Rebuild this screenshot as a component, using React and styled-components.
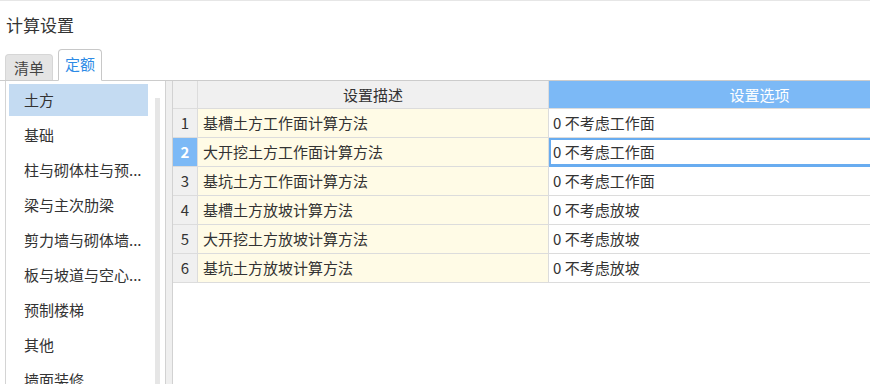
import React from "react";
import styled, { createGlobalStyle } from "styled-components";

const GlobalStyle = createGlobalStyle`
  html, body {
    margin: 0;
    padding: 0;
    background: #ffffff;
    overflow: hidden;
  }
  body {
    font-family: "Noto Sans CJK SC", "Noto Sans", sans-serif;
    color: #333333;
  }
`;

const Page = styled.div`
  width: 870px;
  height: 384px;
  display: flex;
  flex-direction: column;
  border-top: 1px solid #e6e6e6;
  box-sizing: border-box;
  overflow: hidden;
`;

const Title = styled.div`
  height: 47px;
  padding-left: 6px;
  font-size: 17px;
  line-height: 47px;
  color: #333;
`;

const TabBar = styled.div`
  display: flex;
  align-items: flex-end;
  gap: 5px;
  height: 32px;
  padding-left: 5px;
  position: relative;
  z-index: 1;
`;

const Tab = styled.div`
  height: ${(p) => (p.active ? "32px" : "26px")};
  padding: 0 ${(p) => (p.active ? "6px" : "8px")};
  min-width: ${(p) => (p.active ? "44px" : "47px")};
  text-align: center;
  box-sizing: border-box;
  border: 1px solid ${(p) => (p.active ? "#c8c8c8" : "#d6d6d6")};
  border-bottom: ${(p) => (p.active ? "1px solid #fff" : "none")};
  margin-bottom: ${(p) => (p.active ? "-1px" : "0")};
  border-radius: 4px 4px 0 0;
  background: ${(p) => (p.active ? "#ffffff" : "#e4e4e4")};
  color: ${(p) => (p.active ? "#2e8be6" : "#444")};
  font-size: 15px;
  line-height: ${(p) => (p.active ? "28px" : "26px")};
`;

const Body = styled.div`
  flex: 1;
  display: flex;
  border-top: 1px solid #cccccc;
  min-height: 0;
`;

const SidePanel = styled.div`
  width: 160px;
  flex-shrink: 0;
  margin-left: 5px;
  border-left: 1px solid #d4d4d4;
  box-sizing: border-box;
  display: flex;
  padding: 3px 0 0 3px;
`;

const List = styled.div`
  width: 139px;
  display: flex;
  flex-direction: column;
  gap: 3px;
`;

const Item = styled.div`
  height: 32px;
  flex-shrink: 0;
  padding-left: 15px;
  font-size: 15px;
  line-height: 32px;
  white-space: nowrap;
  color: #333;
  background: ${(p) => (p.selected ? "#c4dbf2" : "transparent")};
`;

const ScrollTrack = styled.div`
  width: 5px;
  margin: 14px 0 0 7px;
  background: #e6e6e6;
`;

const Splitter = styled.div`
  width: 6px;
  flex-shrink: 0;
  border-left: 1px solid #d2d2d2;
  border-right: 1px solid #d2d2d2;
  background: #efefef;
`;

const Grid = styled.div`
  display: grid;
  grid-template-columns: 25px 351px 422px;
  grid-auto-rows: 29px;
  grid-template-rows: 28px;
  align-content: start;
  flex-shrink: 0;
`;

const Cell = styled.div`
  box-sizing: border-box;
  border-right: 1px solid #dcdcdc;
  border-bottom: 1px solid #dcdcdc;
  font-size: 15px;
  line-height: 28px;
  white-space: nowrap;
  overflow: hidden;
`;

const HeadCell = styled(Cell)`
  text-align: center;
  background: ${(p) => (p.highlight ? "#7cb9f6" : "#f0f0f0")};
  color: ${(p) => (p.highlight ? "#ffffff" : "#333")};
  line-height: 27px;
`;

const NumCell = styled(Cell)`
  text-align: center;
  background: ${(p) => (p.selected ? "#7cb9f6" : "#f0f0f0")};
  color: ${(p) => (p.selected ? "#ffffff" : "#333")};
  font-weight: ${(p) => (p.selected ? "bold" : "normal")};
`;

const DescCell = styled(Cell)`
  background: #fffbe6;
  padding-left: 5px;
`;

const OptionCell = styled(Cell)`
  padding-left: 4px;
  background: #ffffff;
  box-shadow: ${(p) => (p.focused ? "inset 0 0 0 2px #68acf0" : "none")};
  border-bottom-color: ${(p) => (p.focused ? "#68acf0" : "#dcdcdc")};
`;

const categories = [
  "土方",
  "基础",
  "柱与砌体柱与预...",
  "梁与主次肋梁",
  "剪力墙与砌体墙...",
  "板与坡道与空心...",
  "预制楼梯",
  "其他",
  "墙面装修",
];

const rows = [
  { desc: "基槽土方工作面计算方法", value: "0 不考虑工作面" },
  { desc: "大开挖土方工作面计算方法", value: "0 不考虑工作面" },
  { desc: "基坑土方工作面计算方法", value: "0 不考虑工作面" },
  { desc: "基槽土方放坡计算方法", value: "0 不考虑放坡" },
  { desc: "大开挖土方放坡计算方法", value: "0 不考虑放坡" },
  { desc: "基坑土方放坡计算方法", value: "0 不考虑放坡" },
];

export default function App() {
  const selectedRow = 1;
  return (
    <>
      <GlobalStyle />
      <Page>
        <Title>计算设置</Title>
        <TabBar>
          <Tab>清单</Tab>
          <Tab active>定额</Tab>
        </TabBar>
        <Body>
          <SidePanel>
            <List>
              {categories.map((name, index) => (
                <Item key={name} selected={index === 0}>
                  {name}
                </Item>
              ))}
            </List>
            <ScrollTrack />
          </SidePanel>
          <Splitter />
          <Grid>
            <HeadCell />
            <HeadCell>设置描述</HeadCell>
            <HeadCell highlight>设置选项</HeadCell>
            {rows.map((row, index) => (
              <React.Fragment key={index}>
                <NumCell selected={index === selectedRow}>{index + 1}</NumCell>
                <DescCell>{row.desc}</DescCell>
                <OptionCell focused={index === selectedRow}>{row.value}</OptionCell>
              </React.Fragment>
            ))}
          </Grid>
        </Body>
      </Page>
    </>
  );
}
